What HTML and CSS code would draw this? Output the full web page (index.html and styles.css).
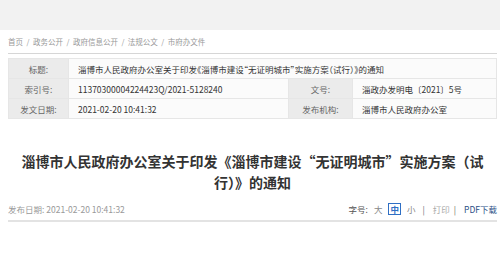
FILE: index.html
```html
<!DOCTYPE html>
<html>
<head>
    <meta charset="utf-8">
    <title>淄博市人民政府办公室关于印发《淄博市建设“无证明城市”实施方案（试行）》的通知</title>
    <link rel="stylesheet" href="styles.css">
</head>

<body>
    <div class="top-band"></div>

    <div class="container">
        <div class="crumbs"><a href="#">首页</a><span class="sep">/</span><a href="#">政务公开</a><span class="sep">/</span><a href="#">政府信息公开</a><span class="sep">/</span><a href="#">法规公文</a><span class="sep">/</span><a href="#">市府办文件</a></div>

        <table class="info-table">
            <colgroup>
                <col class="col-label1">
                <col class="col-value1">
                <col class="col-label2">
                <col class="col-value2">
            </colgroup>
            <tr>
                <td class="label">标题:</td>
                <td colspan="3" class="punct">淄博市人民政府办公室关于印发《淄博市建设“无证明城市”实施方案（试行）》的通知</td>
            </tr>
            <tr>
                <td class="label">索引号:</td>
                <td>11370300004224423Q/2021-5128240</td>
                <td class="label">文号:</td>
                <td>淄政办发明电〔2021〕5号</td>
            </tr>
            <tr>
                <td class="label">发文日期:</td>
                <td>2021-02-20 10:41:32</td>
                <td class="label">发布机构:</td>
                <td>淄博市人民政府办公室</td>
            </tr>
        </table>

        <h1 class="doc-title">淄博市人民政府办公室关于印发《淄博市建设“无证明城市”实施方案（试行）》的通知</h1>

        <div class="meta">
            <div class="pub-date">发布日期: 2021-02-20 10:41:32</div>
            <div class="tools">
                <span class="size-label">字号:</span>
                <a href="#" class="size">大</a>
                <a href="#" class="size active">中</a>
                <a href="#" class="size">小</a>
                <span class="bar">|</span>
                <a href="#" class="print">打印</a>
                <span class="bar">|</span>
                <a href="#" class="pdf">PDF下载</a>
            </div>
        </div>
    </div>
</body>
</html>
```

FILE: styles.css
```css
body {
    margin: 0;
    font-family: "Noto Sans CJK SC", "Liberation Sans", sans-serif;
    color: #333;
    background: #fff;
}

a {
    text-decoration: none;
    color: inherit;
}

.top-band {
    height: 30px;
    background-color: #f2f2f2;
}

.container {
    padding: 0 3px 0 8px;
}

.crumbs {
    font-size: 7.5px;
    color: #999;
    height: 23px;
    line-height: 24px;
    border-bottom: 1px solid #d6d6d6;
}

.crumbs .sep {
    margin: 0 3.5px;
}

/* info table */
.info-table {
    width: 100%;
    margin-top: 4px;
    border-collapse: collapse;
    table-layout: fixed;
    font-size: 8.5px;
}

.col-label1 {
    width: 60px;
}

.col-value1 {
    width: 220px;
}

.col-label2 {
    width: 64px;
}

.info-table td {
    height: 19px;
    padding: 0 0 0 9px;
    border: 1px solid #e6e6e6;
    background-color: #fbfbfb;
    color: #333;
    white-space: nowrap;
}

.info-table td.label {
    padding: 0;
    text-align: center;
    background-color: #ebebeb;
    color: #666;
}

/* half-width punctuation in the title row */
.info-table td.punct {
    font-feature-settings: "halt";
}

/* title */
.doc-title {
    margin: 32px 0 0 0;
    font-size: 14px;
    line-height: 21px;
    font-weight: bold;
    text-align: center;
    color: #333;
}

.meta {
    display: flex;
    justify-content: space-between;
    align-items: center;
    margin-top: 4px;
    height: 23px;
    border-bottom: 2px solid #e3e3e3;
    font-size: 8.5px;
}

.pub-date {
    color: #999;
}

.tools {
    display: flex;
    align-items: center;
    color: #999;
}

.size-label {
    color: #555;
    margin-right: 3px;
}

.size {
    margin: 0 3px;
    color: #888;
}

.size.active {
    border: 1px solid #2f6fc4;
    color: #2f6fc4;
    font-weight: bold;
    padding: 0 1px;
    line-height: 10px;
}

.bar {
    margin: 0 8px 0 4px;
    color: #666;
}

.print {
    color: #aaa;
}

.pdf {
    color: #2c4f86;
}
```
